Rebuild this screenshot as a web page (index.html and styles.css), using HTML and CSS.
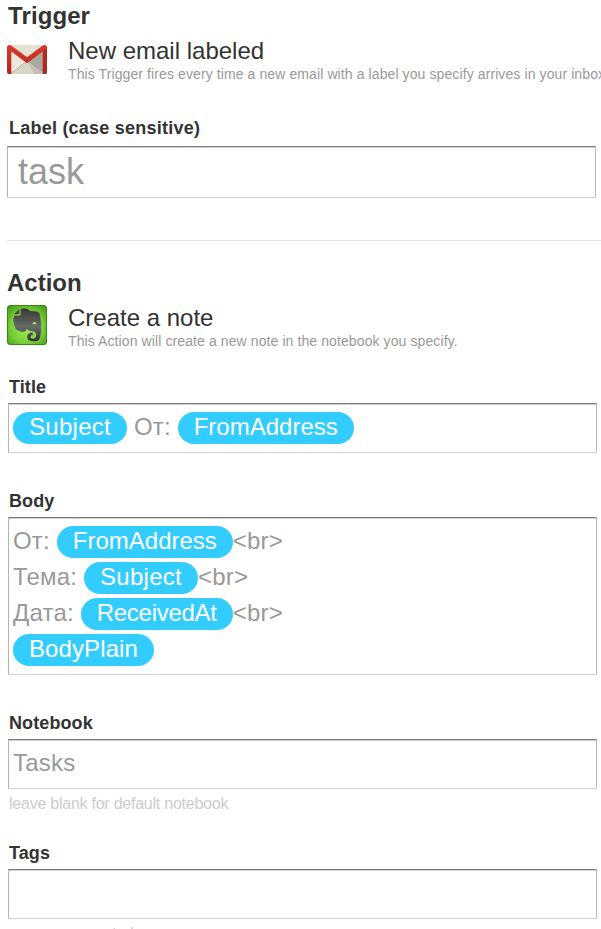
FILE: index.html
```html
<!DOCTYPE html>
<html lang="en">
<head>
<meta charset="utf-8">
<title>Trigger and action</title>
<link rel="stylesheet" href="styles.css">
</head>
<body>
<main class="page">
  <section class="section">
    <h1 class="heading heading-trigger">Trigger</h1>
    <div class="service">
      <svg class="service-icon" viewBox="0 0 40 40">
        <defs>
          <linearGradient id="red" x1="0" y1="0" x2="0" y2="1"><stop offset="0" stop-color="#dc3a2d"/><stop offset="1" stop-color="#b0241f"/></linearGradient>
        </defs>
        <rect x="1" y="6" width="38" height="29" rx="1.500" fill="#e4e0d2"/>
        <path d="M3 6h34L20 19z" fill="#e6e2d3"/>
        <path d="M3 11l17 12L4 34z" fill="#ebe8dc"/>
        <path d="M37 11L20 23l16 11z" fill="#aaa89d"/>
        <path d="M3 35l17-13 16.500 13z" fill="#d9d6c6"/>
        <path d="M20 22l16.500 13H27z" fill="#c3c0b2"/>
        <path d="M4 34.500L20 22" stroke="#b5b09f" stroke-width=".8" fill="none"/>
        <path d="M0 8.500Q0 6 2.500 6q1 0 2 .8L20 18.300 35.500 6.800q1-.8 2-.8Q40 6 40 8.500V33q0 2-2 2h-2.300V12.500L20 24.200 4.300 12.500V35H2q-2 0-2-2z" fill="url(#red)"/>
        <path d="M36 12l4-3v24q0 2-2 2h-2z" fill="#a32820" opacity=".6"/>
      </svg>
      <div class="service-text">
        <h2 class="service-title">New email labeled</h2>
        <p class="service-desc">This Trigger fires every time a new email with a label you specify arrives in your inbox</p>
      </div>
    </div>
    <div class="field field-label">
      <div class="label">Label (case sensitive)</div>
      <div class="box box-large">task</div>
    </div>
  </section>
  <section class="section section-action">
    <h1 class="heading">Action</h1>
    <div class="service service-action">
      <svg class="service-icon" viewBox="0 0 40 40">
        <defs>
          <radialGradient id="green" cx=".5" cy=".55" r=".7"><stop offset="0" stop-color="#a4ee58"/><stop offset=".6" stop-color="#76cf34"/><stop offset="1" stop-color="#429b18"/></radialGradient>
          <linearGradient id="gray" x1="0" y1="0" x2="0" y2="1"><stop offset="0" stop-color="#353735"/><stop offset=".55" stop-color="#686a68"/><stop offset="1" stop-color="#303230"/></linearGradient>
        </defs>
        <rect x=".5" y=".5" width="39" height="39" rx="2.500" fill="url(#green)" stroke="#398716"/>
        <path d="M7 10.500h5.200q1.300 0 1.300-1.300V4.500q2-1.800 5-1.300 3 .3 4 2.300l7 .8q3 .5 3.500 2.800 2 8 1.300 17-.5 6.500-2.300 9-1.500 1.700-5.500 1.500-6.500-.1-6.500-4.500 0-4.800 6-4.800v3q-2.300-.1-2.300 1.600 0 1.700 2.800 1.600 2.500-.2 2.500-3.300 0-4-4.500-4-3 0-4.700-2.200-.8 3.400-4.300 2.900-6-.9-7.500-4-1.700-4-2-7.600-.2-2.500 1-3.500z" fill="url(#gray)" stroke="#b8ee7a" stroke-opacity=".45" stroke-width=".6"/>
        <path d="M7 9.200L12.300 4v5.200z" fill="#494c45"/>
        <path d="M25 19.300q.8-2.500 3-2.300 1.500.2 1.500 2.500-2.200-.8-4.500-.2z" fill="#a3e45b"/>
      </svg>
      <div class="service-text">
        <h2 class="service-title">Create a note</h2>
        <p class="service-desc">This Action will create a new note in the notebook you specify.</p>
      </div>
    </div>
    <div class="field field-title">
      <div class="label">Title</div>
      <div class="box"><div class="line"><span class="token token-subject">Subject</span> От: <span class="token token-address">FromAddress</span></div></div>
    </div>
    <div class="field field-body">
      <div class="label">Body</div>
      <div class="box">
        <div class="line">От: <span class="token token-address">FromAddress</span>&lt;br&gt;</div>
        <div class="line">Тема: <span class="token token-subject">Subject</span>&lt;br&gt;</div>
        <div class="line">Дата: <span class="token token-received">ReceivedAt</span>&lt;br&gt;</div>
        <div class="line"><span class="token token-plain">BodyPlain</span></div>
      </div>
    </div>
    <div class="field field-notebook">
      <div class="label">Notebook</div>
      <div class="box"><div class="line">Tasks</div></div>
      <div class="hint">leave blank for default notebook</div>
    </div>
    <div class="field field-tags">
      <div class="label">Tags</div>
      <div class="box"></div>
      <div class="hint">comma separated</div>
    </div>
  </section>
</main>
</body>
</html>
```
FILE: styles.css
```css
* {
  box-sizing: border-box;
}

body {
  margin: 0;
  background: #fff;
  color: #333;
  font-family: "Liberation Sans", Arial, sans-serif;
}

h1, h2, p {
  margin: 0;
}

.page {
  height: 929px;
  padding-top: 2px;
  overflow: hidden;
  white-space: nowrap;
}

.heading {
  padding-left: 7px;
  font-size: 24px;
  line-height: 28px;
}

.heading-trigger {
  padding-left: 8px;
  letter-spacing: 0.1px;
}

.service {
  display: flex;
  gap: 21px;
  height: 45px;
  margin: 7px 0 0 7px;
}

.service-icon {
  flex: none;
  width: 40px;
  height: 40px;
  margin-top: 2px;
}

.service-action .service-icon {
  margin-top: 1px;
}

.service-title {
  font-size: 24px;
  font-weight: 400;
  line-height: 28px;
}

.service-desc {
  margin-top: 1px;
  color: #999;
  font-size: 14px;
  line-height: 16px;
  letter-spacing: 0.1px;
}

.section-action {
  margin: 42px 0 0 7px;
  padding-top: 28px;
  border-top: 1px solid #e5e5e5;
}

.section-action .heading {
  padding-left: 0;
}

.service-action {
  margin-left: 0;
}

.field {
  width: 589px;
  margin-left: 1px;
}

.field-label {
  margin: 36px 0 0 7px;
}

.field-title {
  margin-top: 28px;
}

.field-body {
  margin-top: 38px;
}

.field-notebook {
  margin-top: 38px;
}

.field-tags {
  margin-top: 29px;
}

.label {
  margin-bottom: 6px;
  padding-left: 1px;
  font-size: 18px;
  font-weight: 700;
  line-height: 20px;
  letter-spacing: 0.1px;
}

.field-label .label {
  margin-bottom: 8px;
  padding-left: 2px;
  letter-spacing: 0.23px;
}

.box {
  min-height: 50px;
  padding: 6px 4px;
  border: 1px solid;
  border-color: #7b7b7b #bbb #d5d5d5 #b5b5b5;
  box-shadow: inset 0 1px #d0d0d0;
  color: #999;
}

.box-large {
  height: 52px;
  padding: 0 10px;
  font-size: 36px;
  line-height: 50px;
}

.line {
  height: 36px;
  font-size: 24px;
  line-height: 34px;
  letter-spacing: 0.2px;
}

.token {
  display: inline-block;
  height: 32px;
  padding: 0 16px;
  border-radius: 16px;
  background: #3cf;
  color: #fff;
  line-height: 30px;
  vertical-align: top;
  margin-top: 2px;
}

.token-address {
  letter-spacing: 0;
}

.token-subject {
  letter-spacing: 0.28px;
}

.token-received {
  letter-spacing: -0.27px;
}

.token-plain {
  letter-spacing: 0.1px;
}

.hint {
  margin-top: 5px;
  padding-left: 1px;
  color: #ccc;
  font-size: 16px;
  line-height: 20px;
  letter-spacing: -0.24px;
}
```
